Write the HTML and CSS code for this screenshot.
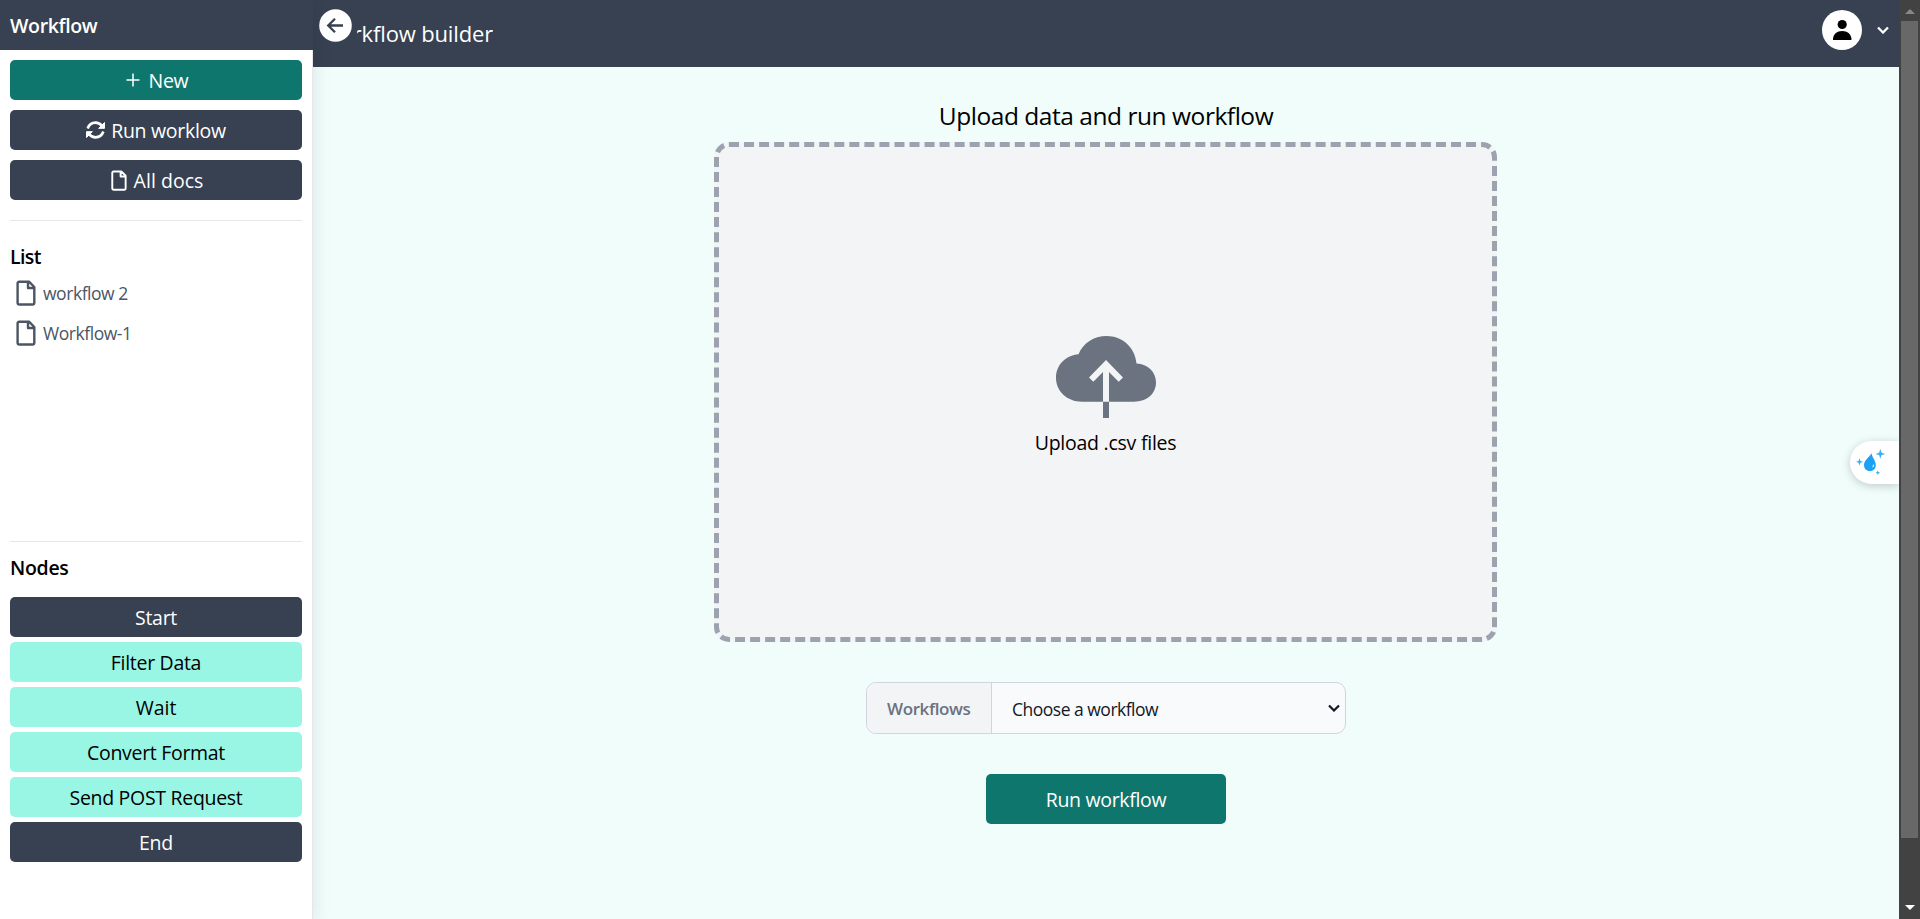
FILE: index.html
```html
<!DOCTYPE html>
<html lang="en">
<head>
<meta charset="utf-8">
<title>Workflow builder</title>
<link rel="stylesheet" href="styles.css">
</head>
<body>
<svg class="defs" aria-hidden="true">
  <symbol id="doc" viewBox="0 0 20 26">
    <path d="M3.2 1.700H13l5.300 5.300v15.900a1.600 1.600 0 0 1-1.600 1.600H3.200a1.600 1.600 0 0 1-1.600-1.600V3.300a1.600 1.600 0 0 1 1.600-1.600Z M12 1.900v6.100h6.100" fill="none" stroke="currentColor" stroke-width="2.400" stroke-linejoin="round"/>
  </symbol>
</svg>
<div class="app">
  <aside class="sidebar">
    <div class="brand"><span class="t-brand">Workflow</span></div>
    <div class="sidebar-body">
      <div class="actions">
        <button class="btn teal"><svg class="i-plus" viewBox="0 0 14 14"><path d="M7 .5v13M.5 7h13" stroke="currentColor" stroke-width="1.500"/></svg><span class="t-new">New</span></button>
        <button class="btn dark"><svg class="i-sync" viewBox="0 0 57 53"><g fill="none" stroke="currentColor" stroke-width="8"><path d="M5 22C9 10 18 4.500 28.500 4.500C37 4.500 43 8 48 14"/><path d="M52 31C48 43 39 48.500 28.500 48.500C20 48.500 14 45 9 39"/></g><path fill="currentColor" stroke="currentColor" stroke-width="3" stroke-linejoin="round" d="M55.500 4V21.500H38ZM1.500 49V31.500H19Z"/></svg><span class="t-runside">Run worklow</span></button>
        <button class="btn dark"><svg class="i-doc-sm"><use href="#doc"/></svg><span class="t-docs">All docs</span></button>
      </div>
      <section class="list">
        <h2 class="t-list">List</h2>
        <a class="item"><svg class="i-doc"><use href="#doc"/></svg><span class="t-w2">workflow 2</span></a>
        <a class="item"><svg class="i-doc"><use href="#doc"/></svg><span class="t-w1">Workflow-1</span></a>
      </section>
      <section class="nodes">
        <h2 class="t-nodes">Nodes</h2>
        <div class="node dark"><span class="t-start">Start</span></div>
        <div class="node mint"><span class="t-filter">Filter Data</span></div>
        <div class="node mint"><span class="t-wait">Wait</span></div>
        <div class="node mint"><span class="t-convert">Convert Format</span></div>
        <div class="node mint"><span class="t-send">Send POST Request</span></div>
        <div class="node dark"><span class="t-end">End</span></div>
      </section>
    </div>
  </aside>
  <main class="main">
    <header class="topbar">
      <div class="title"><span class="t-title">Workflow builder</span></div>
      <div class="collapse"><svg viewBox="0 0 33 33"><circle cx="16.500" cy="16.500" r="16.300" fill="#fff"/><path d="M24 16.500H10M16 9.700l-6.800 6.800 6.800 6.800" fill="none" stroke="#374151" stroke-width="2.300"/></svg></div>
      <div class="user">
        <svg class="avatar" viewBox="0 0 40 40"><circle cx="20" cy="20" r="20" fill="#fff"/><circle cx="20.200" cy="14.500" r="4.600"/><path d="M11 30v-1.500C11.500 24 15 21 20.200 21s8.800 3 9.200 7.500V30Z"/></svg>
        <svg class="chev" viewBox="0 0 12 8"><path d="M1 1.500l5 5 5-5" fill="none" stroke="#fff" stroke-width="2.300"/></svg>
      </div>
    </header>
    <div class="content">
      <h1 class="t-upload">Upload data and run workflow</h1>
      <div class="dropzone">
        <svg class="cloud" viewBox="46 26 100 82"><path fill="#6b7280" d="M72 91.700C57 91.700 46 81 46 68C46 54.500 56 45.500 68.500 44.300C73 33 84 26 96.500 26C112 26 125 37 126.500 53.500C138 54 146 62 146 72.500C146 83.500 137 91.700 124 91.700ZM93 91.700h6V108h-6Z"/><path fill="#f3f4f6" d="M96 50l17 17.500-4.300 4.200L99 62v29.700h-6V62l-9.700 9.700-4.300-4.200Z"/></svg>
        <span class="t-csv">Upload .csv files</span>
      </div>
      <div class="picker">
        <div class="label"><span class="t-label">Workflows</span></div>
        <div class="select"><span class="t-choose">Choose a workflow</span><svg class="chev-sm" viewBox="0 0 12 8"><path d="M1 1.500l5 5 5-5" fill="none" stroke="#111827" stroke-width="2.200"/></svg></div>
      </div>
      <button class="run"><span class="t-run">Run workflow</span></button>
    </div>
    <div class="helper"><svg viewBox="0 0 30 28"><path fill="#1da1f2" d="M15.500 4.300c.6 4.200 4.300 7.200 4.300 12a5.900 5.900 0 0 1-11.800 0C8 11.500 12.500 9 15.500 4.300Z"/><path fill="#fff" d="M17.600 15q1 2.500-.8 4-.9-2 .8-4Z"/><path fill="#38b0f5" d="M24.300 0l1.300 3.700 3.700 1.200-3.700 1.200-1.300 3.700-1.200-3.700-3.700-1.200 3.700-1.200ZM3.500 9.200l1 2.700 2.700.9-2.700.9-1 2.800-1-2.800-2.700-.9 2.700-.9ZM21.800 21.500l.7 1.600 1.600.7-1.600.7-.7 1.600-.7-1.600-1.600-.7 1.600-.7Z"/></svg></div>
  </main>
  <div class="scrollbar"><i class="up"></i><i class="thumb"></i><i class="down"></i></div>
</div>
</body>
</html>
```
FILE: styles.css
```css
* { box-sizing: border-box; margin: 0; }
body { font: 400 19.5px/30px "Open Sans", "Noto Sans", sans-serif; color: #000; overflow: hidden; }
button { border: 0; font: inherit; }
h1, h2 { font-weight: 400; }
span, h1, h2 { white-space: nowrap; }
svg { display: block; flex: none; }
.defs { display: none; }
.app { display: flex; height: 919px; background: #f0fdfa; }

.sidebar { width: 313px; flex: none; background: #fff; border-right: 1px solid #e5e7eb; box-shadow: 0 5px 18px rgba(0,0,0,.1); position: relative; z-index: 1; }
.brand { width: 313px; height: 50px; background: #374151; color: #fff; font-weight: 600; padding: 11px 10px; letter-spacing: -.35px; }
.sidebar-body { padding: 10px 10px 0; }
.actions { display: grid; gap: 10px; height: 161px; align-content: start; border-bottom: 1px solid #e5e7eb; }
.btn, .node { height: 40px; width: 292px; border-radius: 5px; display: flex; align-items: center; justify-content: center; letter-spacing: -.3px; }
.btn span, .node span { padding-top: 2px; }
.teal { background: #0f766e; color: #fff; }
.dark { background: #374151; color: #fff; }
.mint { background: #99f6e4; }
.i-plus { width: 14px; height: 14px; margin: 0 9px 0 2px; }
.i-sync { width: 19px; height: 18px; margin-right: 6px; }
.i-doc-sm { width: 16px; height: 21px; margin: 0 7px 0 2px; }
.list { height: 321px; padding-top: 21px; border-bottom: 1px solid #e5e7eb; }
.list h2, .nodes h2 { font-size: 19.5px; font-weight: 600; }
.list h2 { margin-bottom: 1px; letter-spacing: -.6px; }
.item { display: flex; align-items: center; height: 40px; color: #4b5563; font-size: 17.5px; padding-left: 6px; letter-spacing: -.45px; }
.i-doc { width: 20px; height: 26px; margin-right: 7px; }
.nodes { padding-top: 11px; }
.nodes h2 { margin-bottom: 14px; letter-spacing: -.3px; }
.node { margin-bottom: 5px; }
.t-docs { letter-spacing: .05px; }
.t-wait { letter-spacing: 0; }

.main { width: 1586px; flex: none; position: relative; }
.topbar { height: 67px; background: #374151; color: #fff; display: flex; justify-content: space-between; position: relative; }
.title { margin-left: 44px; padding-top: 18px; width: 136px; overflow: hidden; display: flex; justify-content: flex-end; font-size: 22px; letter-spacing: -.15px; }
.collapse { position: absolute; left: 5.5px; top: 8.5px; width: 33px; height: 33px; }
.user { display: flex; gap: 15px; padding: 10px 10px 0 0; }
.avatar { width: 40px; height: 40px; }
.chev { width: 12px; height: 8px; margin-top: 16px; }
.content { display: flex; flex-direction: column; align-items: center; padding-top: 31px; }
.content h1 { font-size: 24.5px; line-height: 35px; margin-bottom: 9px; letter-spacing: -.46px; }
.dropzone { width: 783px; height: 500px; margin-right: 1px; border: 5px dashed #9ca3af; border-radius: 15px; background: #f3f4f6; display: flex; flex-direction: column; align-items: center; padding-top: 189px; letter-spacing: -.25px; }
.cloud { width: 100px; height: 82px; margin-bottom: 10px; }
.picker { width: 480px; height: 52px; margin-top: 40px; display: flex; border: 1px solid #d1d5db; border-radius: 10px; overflow: hidden; background: #f9fafb; font-size: 17.5px; }
.picker span { padding-top: 2px; }
.label { width: 125px; background: #f3f4f6; border-right: 1px solid #d1d5db; color: #6b7280; display: flex; align-items: center; padding-left: 20px; font-size: 17px; font-weight: 600; letter-spacing: -.4px; }
.select { flex: 1; display: flex; align-items: center; justify-content: space-between; padding: 0 5px 0 20px; color: #111827; letter-spacing: -.5px; }
.chev-sm { width: 12px; height: 8px; }
.run { width: 240px; height: 50px; margin-top: 40px; padding-top: 2px; border-radius: 5px; background: #0f766e; color: #fff; letter-spacing: -.32px; }
.helper { position: absolute; right: 0; top: 441px; width: 49px; height: 43px; padding: 8px 0 0 6px; background: #fff; border-radius: 22px 0 0 22px; box-shadow: 0 2px 10px rgba(0,0,0,.2); clip-path: inset(-20px 0 -20px -20px); }
.helper svg { width: 30px; height: 28px; }

.scrollbar { width: 21px; background: #424242; position: relative; z-index: 2; display: flex; flex-direction: column; align-items: center; padding-top: 9px; }
.up { border: 5px solid transparent; border-top: 0; border-bottom-color: #888; }
.thumb { width: 17px; height: 817px; margin: 7px 0 67px; background: #686868; }
.down { border: 5px solid transparent; border-bottom: 0; border-top-color: #fff; }
```
